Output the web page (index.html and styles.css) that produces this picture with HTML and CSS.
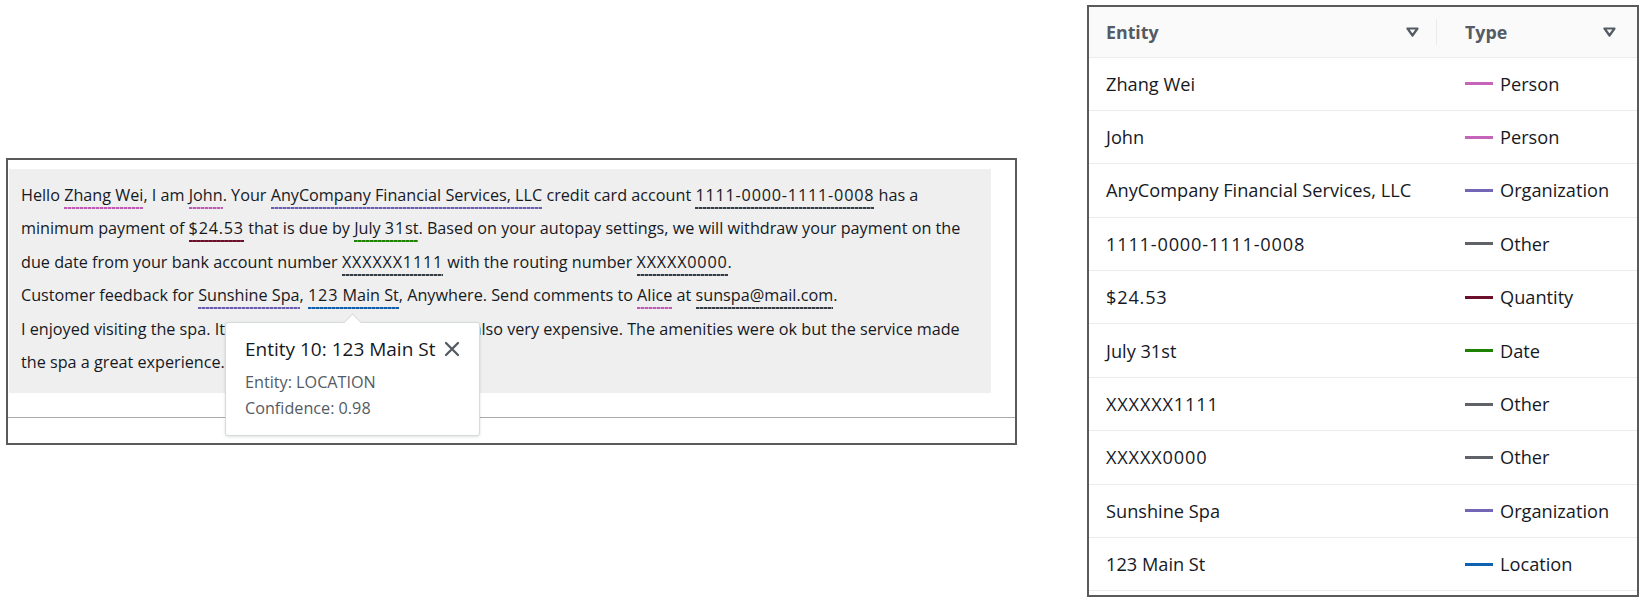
FILE: index.html
```html
<!DOCTYPE html>
<html>
<head>
<meta charset="utf-8">
<link rel="stylesheet" href="styles.css">
</head>
<body>
<div class="page">
  <section class="editor">
    <div class="doc-area">
      <div class="doc">
        <p class="para">Hello <span class="ent person">Zhang Wei</span>, I am <span class="ent person">John</span>. Your <span class="ent org">AnyCompany Financial Services, LLC</span> credit card account <span class="ent other num">1111-0000-1111-0008</span> has a<br>minimum payment of <span class="ent qty num">$24.53</span> that is due by <span class="ent date">July <span class="num">31</span>st</span>. Based on your autopay settings, we will withdraw your payment on the<br>due date from your bank account number <span class="ent other num">XXXXXX1111</span> with the routing number <span class="ent other num">XXXXX0000</span>.</p>
        <p class="para">Customer feedback for <span class="ent org">Sunshine Spa</span>, <span class="ent loc"><span class="num">123</span> Main St</span>, Anywhere. Send comments to <span class="ent person">Alice</span> at <span class="ent other">sunspa@mail.com</span>.</p>
        <p class="para">I enjoyed visiting the spa. It was very comfortable but it was also very expensive. The amenities were ok but the service made<br>the spa a great experience.</p>
      </div>
    </div>
    <div class="editor-footer"></div>
    <div class="popover">
      <div class="popover-head">
        <span class="popover-title">Entity 10: 123 Main St</span>
        <svg class="close" width="16" height="16" viewBox="0 0 16 16"><path d="M2 2 L14 14 M14 2 L2 14" stroke="#545b64" stroke-width="2.3" fill="none" stroke-linecap="round"/></svg>
      </div>
      <div class="popover-line">Entity: LOCATION</div>
      <div class="popover-line">Confidence: 0.98</div>
    </div>
  </section>

  <section class="table">
    <div class="row head">
      <div class="cell c1"><span>Entity</span><svg class="caret" width="13" height="10" viewBox="0 0 13 10"><path d="M1.5 1.5 H11.5 L6.5 8.5 Z" fill="none" stroke="#545b64" stroke-width="2.2" stroke-linejoin="round"/></svg></div>
      <div class="cell c2"><span>Type</span><svg class="caret" width="13" height="10" viewBox="0 0 13 10"><path d="M1.5 1.5 H11.5 L6.5 8.5 Z" fill="none" stroke="#545b64" stroke-width="2.2" stroke-linejoin="round"/></svg></div>
    </div>
    <div class="row"><div class="cell c1">Zhang Wei</div><div class="cell c2"><i class="swatch person-c"></i>Person</div></div>
    <div class="row"><div class="cell c1">John</div><div class="cell c2"><i class="swatch person-c"></i>Person</div></div>
    <div class="row"><div class="cell c1">AnyCompany Financial Services, LLC</div><div class="cell c2"><i class="swatch org-c"></i>Organization</div></div>
    <div class="row"><div class="cell c1 num">1111-0000-1111-0008</div><div class="cell c2"><i class="swatch other-c"></i>Other</div></div>
    <div class="row"><div class="cell c1 num">$24.53</div><div class="cell c2"><i class="swatch qty-c"></i>Quantity</div></div>
    <div class="row"><div class="cell c1">July 31st</div><div class="cell c2"><i class="swatch date-c"></i>Date</div></div>
    <div class="row"><div class="cell c1 num">XXXXXX1111</div><div class="cell c2"><i class="swatch other-c"></i>Other</div></div>
    <div class="row"><div class="cell c1 num">XXXXX0000</div><div class="cell c2"><i class="swatch other-c"></i>Other</div></div>
    <div class="row"><div class="cell c1">Sunshine Spa</div><div class="cell c2"><i class="swatch org-c"></i>Organization</div></div>
    <div class="row"><div class="cell c1">123 Main St</div><div class="cell c2"><i class="swatch loc-c"></i>Location</div></div>
  </section>
</div>
</body>
</html>
```

FILE: styles.css
```css
* { box-sizing: border-box; }
html, body { margin: 0; padding: 0; background: #fff; }
body {
  font-family: "Open Sans", "Noto Sans", sans-serif;
  color: #16191f;
}
.page {
  width: 1645px;
  height: 602px;
  padding: 5px 6px 5px 6px;
  display: flex;
  align-items: center;
  justify-content: space-between;
}

/* ---------- left editor ---------- */
.editor {
  position: relative;
  width: 1011px;
  height: 287px;
  border: 2px solid #5a5a5a;
  display: flex;
  flex-direction: column;
}
.doc-area {
  flex: 1;
  padding: 9px 0 0 1px;
}
.doc {
  width: 982px;
  height: 224px;
  background: #efefef;
  padding: 10px 0 0 12px;
  font-size: 16.2px;
  line-height: 33.5px;
  white-space: nowrap;
}
.para { margin: 0; }
.num { letter-spacing: 0.8px; }
.editor-footer {
  height: 26px;
  border-top: 1px solid #a9a9a9;
}
.ent {
  padding-bottom: 3px;
  background-repeat: repeat-x;
  background-position: left bottom;
  background-size: 4px 2px;
}
.person { background-image: linear-gradient(to right, #c05ab3 0 3px, #d9a8d2 3px 4px); }
.org    { background-image: linear-gradient(to right, #6a5eae 0 3px, #a9a2d4 3px 4px); }
.other  { background-image: linear-gradient(to right, #363c44 0 3px, #8f959c 3px 4px); }
.qty    { background-image: linear-gradient(to right, #6b0f2b 0 3px, #7e2942 3px 4px); }
.date   { background-image: linear-gradient(to right, #1d8102 0 3px, #5aa844 3px 4px); }
.loc    { background-image: linear-gradient(to right, #0f5fa8 0 3px, #5b92c6 3px 4px); }

/* popover */
.popover {
  position: absolute;
  left: 217px;
  top: 162px;
  width: 255px;
  height: 114px;
  background: #fff;
  border: 1px solid #d5dbdb;
  border-radius: 3px;
  box-shadow: 0 1px 3px rgba(0,0,0,0.12);
  padding: 11px 20px 0 19px;
}
.popover::before {
  content: "";
  position: absolute;
  left: 120px;
  top: -7px;
  width: 12px;
  height: 12px;
  background: #fff;
  border-left: 1px solid #d5dbdb;
  border-top: 1px solid #d5dbdb;
  transform: rotate(45deg);
}
.popover-head {
  display: flex;
  align-items: center;
  justify-content: space-between;
  height: 30px;
  margin-bottom: 5px;
}
.popover-title {
  font-size: 19px;
  color: #16191f;
}
.close { margin-right: -1px; }
.popover-line {
  font-size: 16.2px;
  color: #545b64;
  line-height: 26px;
}

/* ---------- right table ---------- */
.table {
  width: 552px;
  height: 592px;
  border: 2px solid #5a5a5a;
  font-size: 18.2px;
}
.row {
  display: grid;
  grid-template-columns: 348px 1fr;
  height: 53.4px;
  border-bottom: 1px solid #eaeded;
}
.row.head {
  height: 50.5px;
  background: #fafafa;
  font-weight: 700;
  font-size: 17.8px;
  color: #545b64;
}
.cell {
  display: flex;
  align-items: center;
}
.c1 { padding: 0 18px 0 17px; }
.c2 { padding: 0 21px 0 28px; }
.head .cell { justify-content: space-between; }
.head .c1 { position: relative; }
.head .c1::after {
  content: "";
  position: absolute;
  right: 0;
  top: 12px;
  bottom: 12px;
  border-right: 1px solid #eaeded;
}
.caret { display: block; }
.swatch {
  display: inline-block;
  width: 28px;
  height: 3px;
  margin-right: 7px;
}
.person-c { background: #c564b8; }
.org-c { background: #7466b6; }
.other-c { background: #5f6368; }
.qty-c { background: #6b0f2b; }
.date-c { background: #1d8102; }
.loc-c { background: #0f62b0; }
```
